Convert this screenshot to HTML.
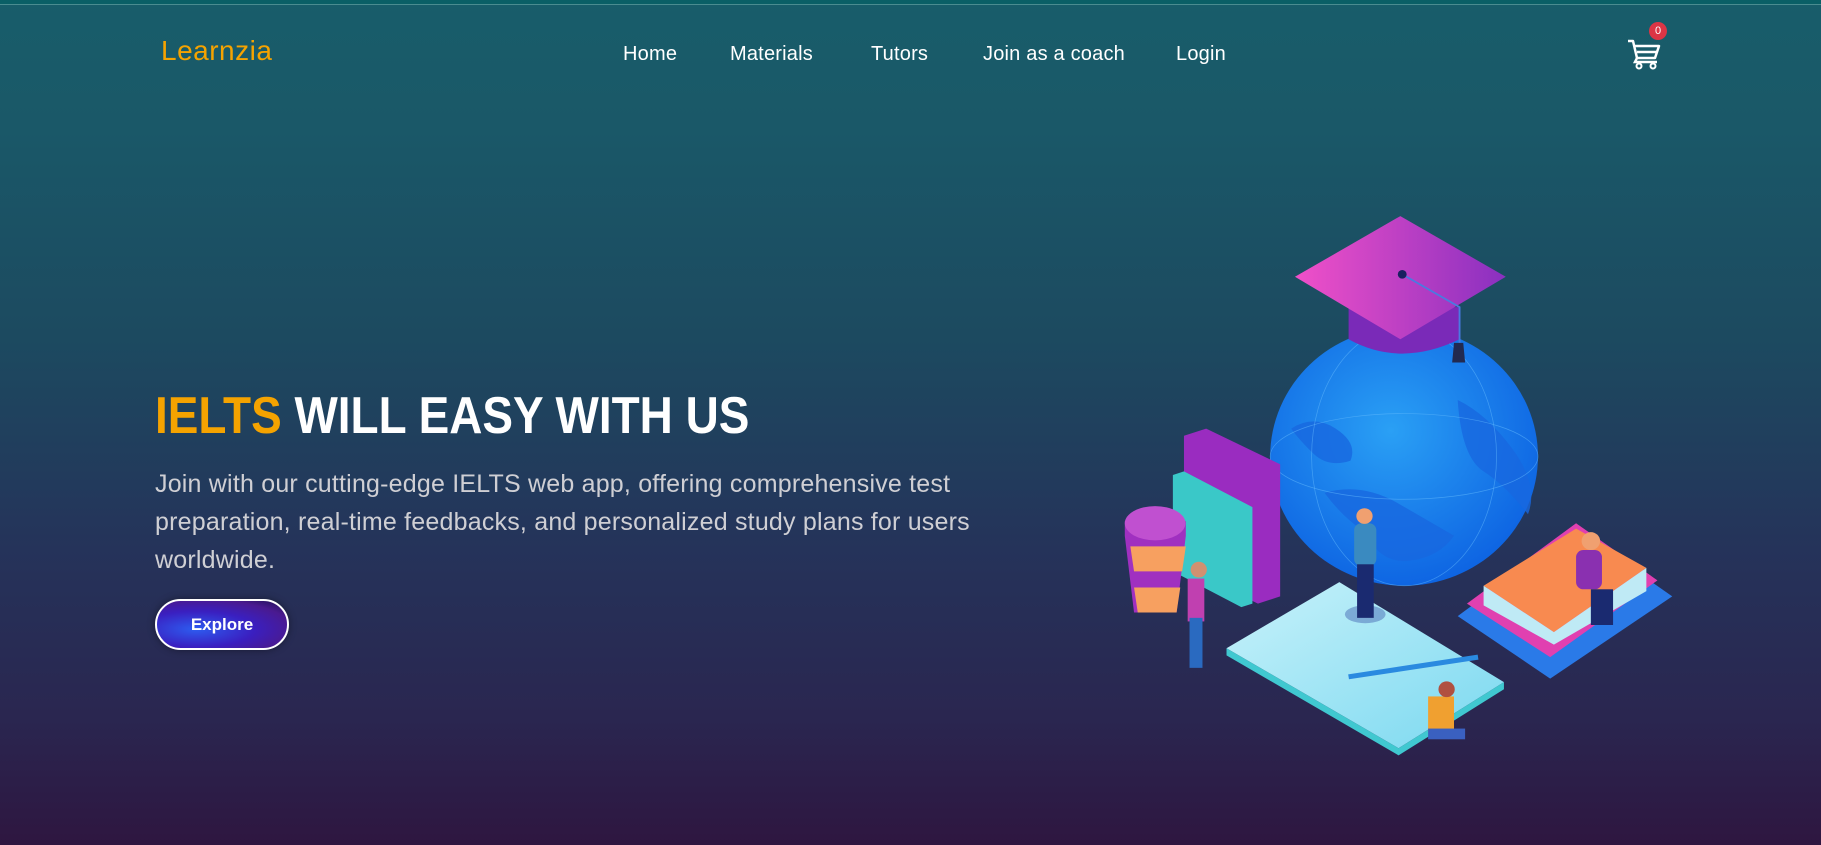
<!DOCTYPE html>
<html><head><meta charset="utf-8"><style>
*{margin:0;padding:0;box-sizing:border-box}
body{width:1821px;height:845px;overflow:hidden;font-family:"Liberation Sans",sans-serif;
background:linear-gradient(180deg,#185d6a 0%,#1a5868 15%,#1c4a60 40%,#25335a 65%,#2a2650 85%,#2e1640 100%);position:relative}
.topline{position:absolute;left:0;top:0;width:100%;height:5px;background:#0a5f66;border-bottom:1px solid #4a8c90}
.logo{position:absolute;left:161px;top:35px;color:#f5a300;font-size:28px;letter-spacing:0.5px}
.nav a{position:absolute;top:43px;color:#fff;font-size:20px;text-decoration:none;letter-spacing:0.2px}
h1{position:absolute;left:155px;top:386px;font-size:52px;font-weight:bold;color:#fff;white-space:nowrap;transform:scaleX(0.883);transform-origin:left}
h1 span{color:#f5a300}
p{position:absolute;left:155px;top:465px;width:880px;font-size:25px;line-height:38px;color:#cfcfd4;letter-spacing:0.2px}
.btn{position:absolute;left:155px;top:599px;width:134px;height:51px;border:2px solid #fff;border-radius:26px;
background:radial-gradient(ellipse at 30% 60%,#2d5cf0 0%,#3a1fc0 45%,#4a1a90 75%,#1a1050 100%);color:#fff;font-size:17px;font-weight:bold;text-align:center;line-height:47px;box-shadow:0 0 8px rgba(0,0,0,0.4)}
.badge{position:absolute;left:1649px;top:22px;width:18px;height:18px;border-radius:50%;background:#dc3545;color:#fff;font-size:11px;text-align:center;line-height:18px}
</style></head><body>
<div class="topline"></div>
<div class="logo">Learnzia</div>
<div class="nav"><a style="left:623px">Home</a><a style="left:730px">Materials</a><a style="left:871px">Tutors</a><a style="left:983px">Join as a coach</a><a style="left:1176px">Login</a></div>
<svg style="position:absolute;left:1626px;top:38px" width="36" height="32" viewBox="0 0 36 32"><path d="M2 3h5l4 17h18l4-12H9" fill="none" stroke="#fff" stroke-width="2.5" stroke-linejoin="round"/><path d="M11 14h20M11 20l-2 4h22" fill="none" stroke="#fff" stroke-width="2.5"/><circle cx="13" cy="28" r="2.5" fill="none" stroke="#fff" stroke-width="2"/><circle cx="27" cy="28" r="2.5" fill="none" stroke="#fff" stroke-width="2"/></svg>
<div class="badge">0</div>
<h1><span>IELTS</span> WILL EASY WITH US</h1>
<p>Join with our cutting-edge IELTS web app, offering comprehensive test preparation, real-time feedbacks, and personalized study plans for users worldwide.</p>
<div class="btn">Explore</div>
<svg style="position:absolute;left:1110px;top:200px" width="580" height="560" viewBox="0 0 1568 1568" preserveAspectRatio="none">
<defs>
<radialGradient id="g" cx="0.45" cy="0.4" r="0.7"><stop offset="0" stop-color="#2aa0f5"/><stop offset="1" stop-color="#0a5ce0"/></radialGradient>
<linearGradient id="cap" x1="0" x2="1"><stop offset="0" stop-color="#f050c8"/><stop offset="1" stop-color="#8a30c0"/></linearGradient>
<linearGradient id="ob" x1="0" y1="0" x2="1" y2="1"><stop offset="0" stop-color="#c8f2fa"/><stop offset="1" stop-color="#7ad8f0"/></linearGradient>
</defs>
<circle cx="795" cy="718" r="362" fill="url(#g)"/>
<path d="M490 640q60-40 120 0t40 90q-60 20-100-20t-60-70zM580 820q100-30 200 30t150 90q-40 60-120 70t-120-80q-60-40-110-110zM940 560q80 40 150 140t40 180q-60-80-120-120t-70-200z" fill="#1868e0" opacity="0.8"/>
<ellipse cx="795" cy="718" rx="362" ry="120" fill="none" stroke="#6ac0ff" stroke-width="2" opacity="0.5"/>
<ellipse cx="795" cy="718" rx="250" ry="362" fill="none" stroke="#6ac0ff" stroke-width="2" opacity="0.5"/>
<path d="M645 300v90q140 80 300 0v-90z" fill="#7a2ab8"/>
<path d="M785 45L1070 215L785 390L500 215Z" fill="url(#cap)"/>
<path d="M790 208L945 300v120" stroke="#4a7ae0" stroke-width="5" fill="none"/><circle cx="790" cy="208" r="12" fill="#1a2060"/>
<path d="M930 400h25l5 55h-35z" fill="#222a50"/>
<path d="M200 660l60-20 200 100v370l-60 20-200-100z" fill="#9a2cc0"/>
<path d="M170 770l30-10 185 100v270l-30 10-185-100z" fill="#3ac8c8"/>
<path d="M40 900q80-60 165 0v40l-25 215h-115l-25-215z" fill="#a030c0"/>
<path d="M55 970h150l-10 70h-130zM65 1085h125l-10 70h-105z" fill="#f7a060"/>
<ellipse cx="122" cy="905" rx="82" ry="48" fill="#c050d0"/>
<path d="M315 1255L620 1070L1065 1350L780 1535Z" fill="url(#ob)"/>
<path d="M315 1255l0 20 465 280 285-185v-20L780 1535z" fill="#40c8d0"/>
<path d="M645 1335l350-55" stroke="#2a8ae0" stroke-width="14"/>
<path d="M940 1165L1260 920L1520 1110L1190 1340Z" fill="#2a7ae8"/>
<path d="M965 1130L1260 905L1480 1065L1190 1280Z" fill="#e040b0"/>
<path d="M1010 1080L1260 920L1450 1030L1200 1210Z" fill="#f88a50"/>
<path d="M1010 1080v55l190 110v-35zM1200 1210v35l250-150v-65z" fill="#bfeaf5"/>
<g fill="#3a8ac0"><ellipse cx="690" cy="1160" rx="55" ry="25" fill="#5a80c0" opacity="0.6"/><rect x="660" y="905" width="60" height="120" rx="20"/><rect x="668" y="1020" width="45" height="150" fill="#1a2a70"/><circle cx="688" cy="885" r="22" fill="#f0a070"/></g>
<g><rect x="210" y="1060" width="45" height="120" fill="#c040b0"/><rect x="215" y="1170" width="35" height="140" fill="#2a6ac0"/><circle cx="240" cy="1035" r="22" fill="#d09070"/></g>
<g><rect x="1260" y="980" width="70" height="110" rx="20" fill="#8a30b0"/><rect x="1300" y="1090" width="60" height="100" fill="#1a2a70"/><circle cx="1300" cy="955" r="25" fill="#f0a070"/></g>
<g><rect x="860" y="1390" width="70" height="100" fill="#f0a030"/><circle cx="910" cy="1370" r="22" fill="#b05040"/><rect x="860" y="1480" width="100" height="30" fill="#3a60c0"/></g>
</svg>
</body></html>
